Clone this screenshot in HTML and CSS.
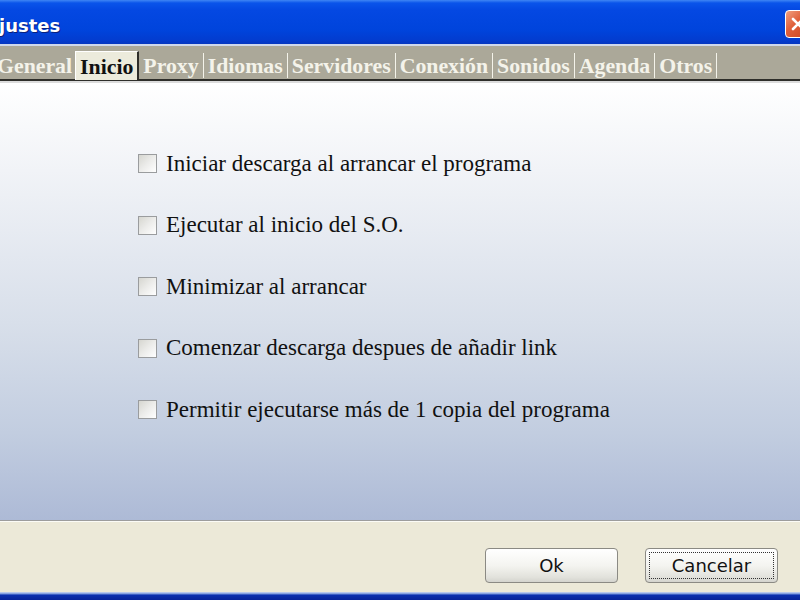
FILE: index.html
```html
<!DOCTYPE html>
<html lang="es">
<head>
<meta charset="utf-8">
<title>Ajustes</title>
<link rel="stylesheet" href="styles.css">
</head>
<body>
<div class="window">
  <div class="titlebar">
    <span class="title">justes</span>
    <span class="close"><svg width="16" height="16" viewBox="0 0 16 16"><path d="M3 3 L13 13 M13 3 L3 13" stroke="#fff" stroke-width="2.6" stroke-linecap="round"/></svg></span>
  </div>
  <div class="tabstrip">
    <div class="tab first">General</div>
    <div class="tab active">Inicio</div>
    <div class="tab">Proxy</div>
    <div class="tab">Idiomas</div>
    <div class="tab">Servidores</div>
    <div class="tab">Conexión</div>
    <div class="tab">Sonidos</div>
    <div class="tab">Agenda</div>
    <div class="tab">Otros</div>
  </div>
  <div class="content">
    <label class="row"><span class="box"></span><span class="lbl">Iniciar descarga al arrancar el programa</span></label>
    <label class="row"><span class="box"></span><span class="lbl">Ejecutar al inicio del S.O.</span></label>
    <label class="row"><span class="box"></span><span class="lbl">Minimizar al arrancar</span></label>
    <label class="row"><span class="box"></span><span class="lbl">Comenzar descarga despues de añadir link</span></label>
    <label class="row"><span class="box"></span><span class="lbl">Permitir ejecutarse más de 1 copia del programa</span></label>
  </div>
  <div class="footer">
    <button class="btn">Ok</button>
    <button class="btn focus"><span class="focusring">Cancelar</span></button>
  </div>
  <div class="bottomedge"></div>
</div>
</body>
</html>
```
FILE: styles.css
```css
html, body {
  margin: 0;
  padding: 0;
  width: 800px;
  height: 600px;
  overflow: hidden;
}
.window {
  width: 800px;
  height: 600px;
  display: flex;
  flex-direction: column;
  overflow: hidden;
}
.titlebar {
  height: 44px;
  flex: none;
  display: flex;
  align-items: center;
  justify-content: space-between;
  background: linear-gradient(to bottom, #3f86f4 0px, #0a54ea 3px, #0448e2 10px, #0044dc 30px, #033ccf 40px, #0537c0 44px);
  border-bottom: 2px solid #cfd8ec;
}
.title {
  font-family: "DejaVu Sans", sans-serif;
  font-weight: bold;
  font-size: 18px;
  color: #fff;
  text-shadow: 1px 1px 0 #0a1f7a;
  margin-left: -1px;
  padding-top: 6px;
}
.close {
  width: 28px;
  height: 28px;
  margin-right: -13px;
  margin-top: 3px;
  border: 1px solid #fff;
  border-radius: 4px;
  background: linear-gradient(135deg, #f0a080 0%, #e0613c 40%, #c8401e 100%);
  display: flex;
  align-items: center;
  justify-content: flex-start;
  padding-left: 4px;
  box-sizing: border-box;
}
.tabstrip {
  height: 35px;
  flex: none;
  display: flex;
  align-items: flex-end;
  background: #aba899;
  border-bottom: 2px solid #2e2e2a;
  box-sizing: border-box;
}
.tab {
  font-family: "Liberation Serif", serif;
  font-weight: bold;
  font-size: 21.8px;
  color: #f4f3ea;
  padding: 0 4px 0 4px;
  height: 25px;
  line-height: 27px;
  border-right: 1px solid #f4f3ea;
  margin-bottom: 1px;
  white-space: nowrap;
}
.tab.first {
  margin-left: -7px;
  border-right: none;
  padding-right: 3px;
}
.tab.active {
  background: #ecebdc;
  color: #111;
  height: 28px;
  line-height: 31px;
  border-top: 1px solid #fff;
  border-left: 1px solid #fff;
  border-right: 2px solid #2e2e2a;
  padding: 0 4px 0 4px;
  margin-bottom: -1px;
}
.content {
  flex: 1;
  border-top: 2px solid #dcdcdc;
  border-bottom: 1px solid #9d9d9d;
  background: linear-gradient(to bottom, #ffffff 0%, #f1f3f7 20%, #d8dfea 55%, #c2cde0 80%, #adbad6 100%);
  padding: 50px 0 0 138px;
  display: flex;
  flex-direction: column;
}
.row {
  display: flex;
  align-items: center;
  height: 61.5px;
  flex: none;
}
.box {
  width: 19px;
  height: 19px;
  box-sizing: border-box;
  border: 1px solid #9a9c9e;
  background: linear-gradient(135deg, #d6d6d0 0%, #ececea 50%, #ffffff 100%);
  margin-right: 9px;
  flex: none;
}
.lbl {
  font-family: "Liberation Serif", serif;
  font-size: 23px;
  color: #111;
}
.footer {
  height: 71px;
  flex: none;
  background: #ece9d8;
  border-top: 1px solid #fbfbf6;
  display: flex;
  align-items: flex-start;
  justify-content: flex-end;
  padding: 26px 22px 0 0;
  box-sizing: border-box;
  gap: 27px;
}
.btn {
  width: 133px;
  height: 35px;
  border: 1px solid #8b8a84;
  border-radius: 4px;
  background: linear-gradient(to bottom, #ffffff 0%, #f4f4f0 50%, #e2e2dc 85%, #d4d4ce 100%);
  font-family: "DejaVu Sans", sans-serif;
  font-size: 18px;
  color: #111;
  padding: 0;
  box-sizing: border-box;
}
.btn.focus {
  padding: 3px;
  display: flex;
}
.focusring {
  flex: 1;
  border: 1px dotted #333;
  display: flex;
  align-items: center;
  justify-content: center;
}
.bottomedge {
  height: 8px;
  flex: none;
  background: linear-gradient(to bottom, #cfdaf0 0px, #6f8fdc 2px, #0a2fae 3px, #07239a 8px);
}
```
